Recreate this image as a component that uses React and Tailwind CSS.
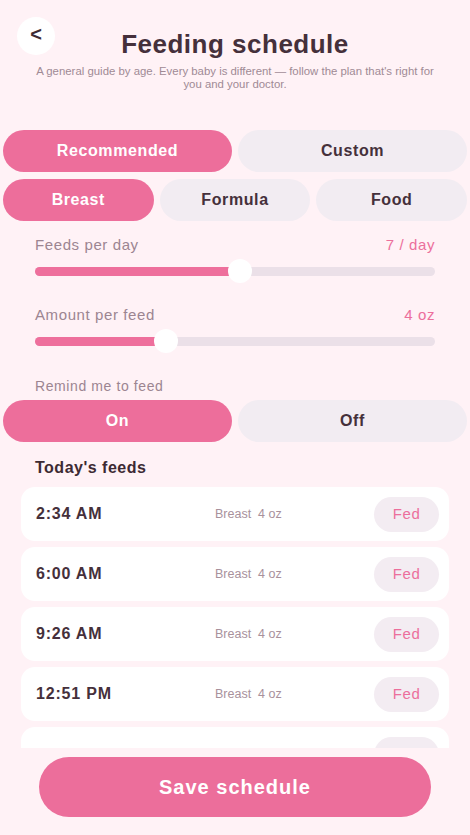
const font = { fontFamily: '"Liberation Sans", Arial, sans-serif' }

function Segment({ options, active }) {
  return (
    <div className="flex gap-[6px] px-[3px]">
      {options.map((o) => (
        <div
          key={o}
          className={`flex-1 h-[42px] rounded-full flex items-center justify-center text-[16px] font-bold tracking-[0.6px] ${
            o === active ? 'bg-[#ed6e9b] text-white' : 'bg-[#f2ecf2] text-[#45303b]'
          }`}
        >
          {o}
        </div>
      ))}
    </div>
  )
}

function Slider({ label, value, percent, className = '' }) {
  return (
    <div className={`px-[35px] ${className}`}>
      <div className="flex justify-between items-center h-[20px] text-[15px] tracking-[0.6px]">
        <span className="text-[#9c8591]">{label}</span>
        <span className="text-[#ec6f9c]">{value}</span>
      </div>
      <div className="relative h-[24px] mt-[4px] flex items-center">
        <div className="w-full h-[9px] rounded-full bg-[#ebe0e8] overflow-hidden">
          <div className="h-full bg-[#ee6f9c]" style={{ width: `${percent}%` }} />
        </div>
        <div
          className="absolute top-0 w-[24px] h-[24px] -ml-[12px] rounded-full bg-white"
          style={{ left: `${percent}%` }}
        />
      </div>
    </div>
  )
}

function FeedCard({ time }) {
  return (
    <div className="bg-white rounded-[14px] h-[54px] flex items-center pl-[15px] pr-[10px] shrink-0">
      <div className="w-[179px] text-[16px] font-bold tracking-[0.8px] text-[#45303b]">{time}</div>
      <div className="flex-1 text-[12.5px] text-[#a8919c] whitespace-pre">{time ? 'Breast  4 oz' : ''}</div>
      <div className="w-[65px] h-[35px] rounded-full bg-[#f3ecf2] flex items-center justify-center text-[15px] tracking-[0.6px] text-[#ec6f9c]">
        {time ? 'Fed' : ''}
      </div>
    </div>
  )
}

export default function App() {
  // last card is scrolled past the fold, only its top edge shows
  const feeds = ['2:34 AM', '6:00 AM', '9:26 AM', '12:51 PM', '']
  return (
    <div className="w-[470px] h-[835px] bg-[#fff2f6] flex flex-col overflow-hidden" style={font}>
      <div className="relative pt-[27px]">
        <div className="absolute left-[17px] top-[17px] w-[38px] h-[38px] rounded-full bg-white flex items-center justify-center text-[20px] font-bold text-[#3d2a33] pb-[4px]">
          &lt;
        </div>
        <h1 className="text-center text-[26px] leading-[34px] font-bold tracking-[0.5px] text-[#45303b]">
          Feeding schedule
        </h1>
        <p className="mt-[4px] mx-auto w-[402px] text-center text-[11.4px] leading-[13px] text-[#a08a95]">
          A general guide by age. Every baby is different — follow the plan that's right for you and your doctor.
        </p>
      </div>

      <div className="mt-[39px]">
        <Segment options={['Recommended', 'Custom']} active="Recommended" />
      </div>
      <div className="mt-[7px]">
        <Segment options={['Breast', 'Formula', 'Food']} active="Breast" />
      </div>

      <Slider label="Feeds per day" value="7 / day" percent={51.25} className="mt-[14px]" />
      <Slider label="Amount per feed" value="4 oz" percent={32.75} className="mt-[22px]" />

      <div className="mt-[24px] px-[35px] h-[18px] flex items-center text-[14px] tracking-[0.6px] text-[#9c8591]">
        Remind me to feed
      </div>
      <div className="mt-[5px]">
        <Segment options={['On', 'Off']} active="On" />
      </div>

      <div className="mt-[16px] px-[35px] h-[20px] flex items-center text-[16px] font-bold tracking-[0.5px] text-[#3d2a33]">
        Today's feeds
      </div>

      <div className="mt-[9px] mx-[21px] flex-1 overflow-hidden flex flex-col gap-[6px]">
        {feeds.map((t, i) => (
          <FeedCard key={i} time={t} />
        ))}
      </div>

      <div className="h-[87px] shrink-0 pt-[9px] px-[39px]">
        <div className="h-[60px] rounded-full bg-[#ec6e9b] flex items-center justify-center text-white text-[20px] font-bold tracking-[1px]">
          Save schedule
        </div>
      </div>
    </div>
  )
}
